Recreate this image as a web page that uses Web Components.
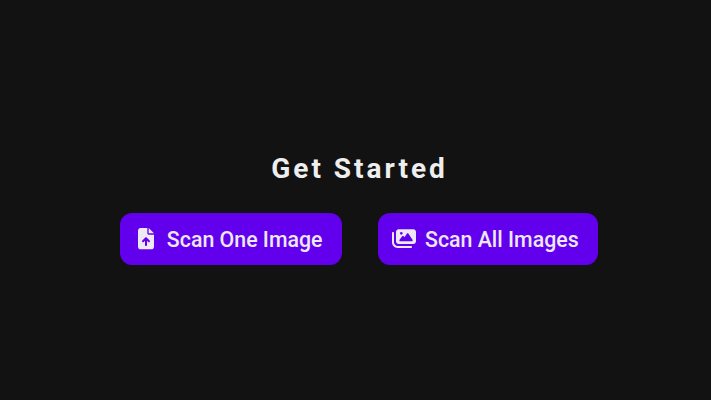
<!DOCTYPE html>
<html>
<head>
<meta charset="utf-8">
<title>Get Started</title>
<style>
  html, body { margin: 0; height: 100%; background: #121212; }
  body { font-family: Roboto, "Liberation Sans", sans-serif; }
</style>
</head>
<body>
<get-started></get-started>

<template id="scan-button-tpl">
  <style>
    :host { display: block; }
    button {
      display: flex;
      align-items: center;
      gap: 9px;
      height: 52px;
      padding: 0 19.5px 0 14px;
      background: #6200ee;
      color: #ede7f6;
      border: 0;
      border-radius: 12px;
      font: 500 21.33px/1 Roboto, "Liberation Sans", sans-serif;
      cursor: pointer;
    }
    .icon { display: flex; justify-content: center; width: 24px; flex: none; }
    .label { padding-top: 2px; }
    ::slotted(svg) { display: block; flex: none; fill: currentColor; }
  </style>
  <button type="button"><span class="icon"><slot name="icon"></slot></span><span class="label"><slot></slot></span></button>
</template>

<template id="get-started-tpl">
  <style>
    :host {
      display: flex;
      flex-direction: column;
      align-items: center;
      gap: 28px;
      box-sizing: border-box;
      height: 100%;
      padding: 152px 0 0 7px;
    }
    h1 {
      margin: 0 0 0 1px;
      color: #eeeeee;
      font: 700 28px/33px Roboto, "Liberation Sans", sans-serif;
      letter-spacing: 3px;
    }
    .actions { display: flex; gap: 36px; }
  </style>
  <h1>Get Started</h1>
  <div class="actions">
    <scan-button>
      <svg slot="icon" width="16" height="21.33" viewBox="0 0 384 512">
        <path d="M64 0C28.700 0 0 28.700 0 64V448c0 35.300 28.700 64 64 64H320c35.300 0 64-28.700 64-64V160H256c-17.700 0-32-14.300-32-32V0H64zM256 0V128H384L256 0zM216 408c0 13.300-10.700 24-24 24s-24-10.700-24-24V305.900l-31 31c-9.400 9.400-24.600 9.400-33.900 0s-9.400-24.600 0-33.900l72-72c9.400-9.400 24.600-9.400 33.900 0l72 72c9.400 9.400 9.400 24.600 0 33.900s-24.600 9.400-33.900 0l-31-31V408z"/>
      </svg>
      Scan One Image
    </scan-button>
    <scan-button>
      <svg slot="icon" width="24" height="21.33" viewBox="0 0 576 512">
        <path d="M160 32c-35.300 0-64 28.700-64 64V320c0 35.300 28.700 64 64 64H512c35.300 0 64-28.700 64-64V96c0-35.300-28.700-64-64-64H160zM396 138.700l96 144c4.900 7.400 5.400 16.800 1.200 24.600S480.800 320 472 320H328 280 200c-9.200 0-17.600-5.300-21.600-13.600s-2.900-18.200 2.900-25.400l64-80c4.600-5.700 11.400-9 18.700-9s14.200 3.300 18.700 9l17.300 21.600 56-84C360.500 132 368 128 376 128s15.500 4 20 10.700zM192 128a32 32 0 1 1 64 0 32 32 0 1 1 -64 0zM48 120c0-13.300-10.700-24-24-24S0 106.700 0 120V344c0 75.100 60.900 136 136 136H456c13.300 0 24-10.700 24-24s-10.700-24-24-24H136c-48.600 0-88-39.400-88-88V120z"/>
      </svg>
      Scan All Images
    </scan-button>
  </div>
</template>

<script>
  class ScanButton extends HTMLElement {
    constructor() {
      super();
      this.attachShadow({ mode: "open" });
      this.shadowRoot.appendChild(document.getElementById("scan-button-tpl").content.cloneNode(true));
    }
  }
  class GetStarted extends HTMLElement {
    constructor() {
      super();
      this.attachShadow({ mode: "open" });
      this.shadowRoot.appendChild(document.getElementById("get-started-tpl").content.cloneNode(true));
    }
  }
  customElements.define("scan-button", ScanButton);
  customElements.define("get-started", GetStarted);
</script>
</body>
</html>
